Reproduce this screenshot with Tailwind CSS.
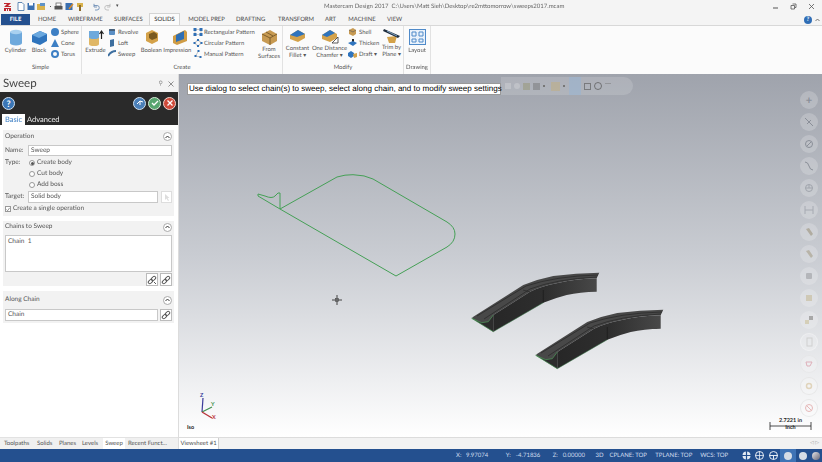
<!DOCTYPE html>
<html lang="en">
<head>
<meta charset="UTF-8">
<title>Mastercam Design 2017</title>
<script src="https://cdn.jsdelivr.net/npm/@tailwindcss/browser@4"></script>
</head>
<body class="m-0 overflow-hidden bg-white">
<div class="w-[822px] h-[462px] flex flex-col overflow-hidden font-['Lato',sans-serif] [text-rendering:geometricPrecision] text-[#4a4a4a] blur-[0.4px]">

  <!-- title bar -->
  <div class="h-[13px] flex items-center bg-[#f4f4f4] relative">
    <div class="flex items-center gap-[2px] pl-[3px]">
      <svg width="9" height="10" viewBox="0 0 9 10"><path d="M1 1h7L5 4h3v1H1l3-3H1zM1 6h7v3H6V7H5v2H4V7H3v2H1z" fill="#c0272d"/></svg>
      <svg class="ml-[3px]" width="8" height="9" viewBox="0 0 8 9"><path d="M1 .5h4l2 2v6H1z" fill="#fff" stroke="#3d6ea5" stroke-width=".8"/></svg>
      <svg width="8" height="9" viewBox="0 0 8 9"><rect x=".5" y="1" width="7" height="7" fill="#3a6fb0"/><rect x="2" y="1" width="4" height="2.5" fill="#fff"/></svg>
      <svg width="10" height="9" viewBox="0 0 10 9"><path d="M0 2h4l1 1h3v5H0z" fill="#d9b24c"/><path d="M3 1h5v3H3z" fill="#5f93c7"/></svg>
      <span class="w-[1px] h-[1px] mx-[1px] bg-[#555]"></span>
      <svg width="9" height="9" viewBox="0 0 9 9"><rect x="2" y="1" width="5" height="3" fill="#fff" stroke="#555" stroke-width=".7"/><rect x=".5" y="4" width="8" height="3.5" fill="#555"/></svg>
      <svg width="9" height="9" viewBox="0 0 9 9"><rect x=".5" y="1" width="7" height="7" fill="#3a6fb0"/><path d="M4 7l4-5" stroke="#d98a2b" stroke-width="1.4"/></svg>
      <svg width="9" height="10" viewBox="0 0 9 10"><path d="M1 1h6v4H1z" fill="#d9b24c"/><path d="M3 3h2v6H3z" fill="#8a6a2a"/></svg>
      <svg class="ml-[5px]" width="8" height="8" viewBox="0 0 8 8"><path d="M2 2.500h3a2 2 0 0 1 0 4.500H3M2 .8v3.200h3" fill="none" stroke="#6f8fb5" stroke-width=".9"/></svg>
      <svg class="ml-[2px]" width="8" height="8" viewBox="0 0 8 8"><path d="M6 2.500H3a2 2 0 0 0 0 4.500h2M6 .8v3.200H3" fill="none" stroke="#bbb" stroke-width=".9"/></svg>
      <span class="ml-[2px] text-[5px] leading-none">▾</span>
    </div>
    <div class="absolute left-[324px] top-[2px] text-[6px] leading-[9px] whitespace-pre text-[#666]">Mastercam Design 2017  C:\Users\Matt Sieh\Desktop\re2mttomorrow\sweeps2017.mcam</div>
    <div class="ml-auto flex items-center gap-[11px] pr-[7px] text-[#555]">
      <svg width="7" height="7" viewBox="0 0 7 7"><path d="M1 5h5" stroke="#555"/></svg>
      <svg width="7" height="7" viewBox="0 0 7 7"><path d="M2.500 1h3.500v3.500h-1M1 2.500h3.500v3.500H1z" fill="none" stroke="#555" stroke-width=".8"/></svg>
      <svg width="7" height="7" viewBox="0 0 7 7"><path d="M1 1l5 5M6 1L1 6" stroke="#555" stroke-width=".8"/></svg>
    </div>
  </div>

  <!-- ribbon tabs -->
  <div class="h-[12px] flex items-end bg-[#f4f4f4] text-[5.900px] leading-[11px] whitespace-nowrap relative">
    <div class="w-[29px] h-[11px] ml-[1px] bg-[#24508f] text-white text-center font-bold">FILE</div>
    <div class="ml-[8px] w-[18px] text-center">HOME</div>
    <div class="ml-[12px] w-[34px] text-center">WIREFRAME</div>
    <div class="ml-[12px] w-[28px] text-center">SURFACES</div>
    <div class="ml-[7px] w-[31px] h-[12px] bg-[#fbfbfb] border border-b-0 border-[#d4d4d4] text-center text-[#333]">SOLIDS</div>
    <div class="ml-[8px] w-[37px] text-center">MODEL PREP</div>
    <div class="ml-[11px] w-[29px] text-center">DRAFTING</div>
    <div class="ml-[13px] w-[35px] text-center">TRANSFORM</div>
    <div class="ml-[12px] w-[11px] text-center">ART</div>
    <div class="ml-[12px] w-[28px] text-center">MACHINE</div>
    <div class="ml-[11px] w-[15px] text-center">VIEW</div>
    <div class="ml-auto flex items-center gap-[3px] pr-[2px] pb-[1px]">
      <span class="w-[8px] h-[8px] rounded-full bg-[#2f6db5] text-white text-[6px] leading-[8px] text-center font-bold">?</span>
      <svg width="5" height="4" viewBox="0 0 5 4"><path d="M.5 3l2-2 2 2" fill="none" stroke="#555" stroke-width=".8"/></svg>
    </div>
  </div>

  <!-- ribbon -->
  <div class="h-[49px] flex bg-[#fbfbfb] border-t border-[#d8d8d8] text-[5.900px] leading-[7px] text-[#555] shrink-0">

    <!-- Simple -->
    <div class="w-[82px] border-r border-[#e2e2e2] flex flex-col">
      <div class="flex-1 flex">
        <div class="w-[29px] pl-[2px] flex flex-col items-center pt-[3px]">
          <svg width="14" height="17" viewBox="0 0 14 17"><path d="M1 3v11a6 2.500 0 0 0 12 0V3z" fill="#6ea9dc"/><ellipse cx="7" cy="3" rx="6" ry="2.200" fill="#a8d0ef"/></svg>
          <div class="mt-[1px]">Cylinder</div>
        </div>
        <div class="w-[20px] flex flex-col items-center pt-[3px]">
          <svg width="17" height="17" viewBox="0 0 17 17"><path d="M1 6l8-4 7 3v7l-7 4-8-3z" fill="#2f74bd"/><path d="M1 6l8-4 7 3-8 4z" fill="#6aa8df"/></svg>
          <div class="mt-[1px]">Block</div>
        </div>
        <div class="flex flex-col gap-[3px] pt-[2px] pl-[2px]">
          <div class="flex items-center gap-[2px] h-[8px]"><span class="w-[8px] h-[8px] rounded-full bg-[#3d7fc4]"></span>Sphere</div>
          <div class="flex items-center gap-[2px] h-[8px]"><svg width="8" height="8" viewBox="0 0 8 8"><path d="M4 0l4 8H0z" fill="#3d7fc4"/></svg>Cone</div>
          <div class="flex items-center gap-[2px] h-[8px]"><span class="w-[8px] h-[8px] rounded-full border-2 border-[#3d7fc4]"></span>Torus</div>
        </div>
      </div>
      <div class="h-[11px] text-center leading-[9px]">Simple</div>
    </div>

    <!-- Create -->
    <div class="w-[201px] border-r border-[#e2e2e2] flex flex-col">
      <div class="flex-1 flex">
        <div class="w-[24px] pl-[3px] flex flex-col items-center pt-[3px]">
          <svg width="16" height="17" viewBox="0 0 16 17"><path d="M1 8v7a5 2 0 0 0 10 0V8z" fill="#e0b765"/><path d="M1 2v6a5 2 0 0 0 10 0V2z" fill="#6ea9dc"/><path d="M13.500 10V3M11.500 5l2-3 2 3" fill="none" stroke="#222" stroke-width="1.200"/></svg>
          <div class="mt-[1px]">Extrude</div>
        </div>
        <div class="w-[33px] flex flex-col gap-[3px] pt-[2px] pl-[2px]">
          <div class="flex items-center gap-[2px] h-[8px]"><svg width="8" height="8" viewBox="0 0 8 8"><rect x="1" y="1" width="6" height="6" rx="1" fill="#5a8fc5"/><path d="M1 2h6" stroke="#333"/></svg>Revolve</div>
          <div class="flex items-center gap-[2px] h-[8px]"><svg width="8" height="8" viewBox="0 0 8 8"><path d="M2 1l4-1v7l-4 1z" fill="#3e6f9f"/></svg>Loft</div>
          <div class="flex items-center gap-[2px] h-[8px]"><svg width="8" height="8" viewBox="0 0 8 8"><path d="M0 6q3-5 8-5" fill="none" stroke="#3e6f9f" stroke-width="2"/></svg>Sweep</div>
        </div>
        <div class="w-[54px] flex flex-col pt-[3px]">
          <div class="flex justify-center gap-[13px] h-[17px]">
            <svg width="14" height="16" viewBox="0 0 14 16"><path d="M1 4l6-3 6 3v8l-6 3-6-3z" fill="#d4a24a"/><path d="M4 5l5-2 3 2v4l-5 2-3-2z" fill="#7a5a20"/></svg>
            <svg width="16" height="17" viewBox="0 0 16 17"><path d="M1 7l12-6 2 2v9l-10 4-4-2z" fill="#cf9c45"/><path d="M4 6l8-4v8l-8 3z" fill="#2f6fb5"/></svg>
          </div>
          <div class="mt-[1px] text-center whitespace-nowrap">Boolean Impression</div>
        </div>
        <div class="w-[63px] flex flex-col gap-[3px] pt-[2px]">
          <div class="flex items-center gap-[1px] h-[8px] whitespace-nowrap"><svg class="shrink-0" width="10" height="8" viewBox="0 0 9 8"><path d="M1.500 1.500h6v5h-6z" fill="none" stroke="#aaa" stroke-width=".6"/><path d="M0 0h3v3H0zM6 0h3v3H6zM0 5h3v3H0zM6 5h3v3H6z" fill="#2f6fb5"/></svg>Rectangular Pattern</div>
          <div class="flex items-center gap-[1px] h-[8px] whitespace-nowrap"><svg class="shrink-0" width="10" height="8" viewBox="0 0 9 8"><circle cx="4.500" cy="4" r="2.500" fill="none" stroke="#aaa" stroke-width=".8"/><path d="M3.500 0h2v2h-2zM0 3h2v2H0zM7 3h2v2H7zM3.500 6h2v2h-2z" fill="#2f6fb5"/></svg>Circular Pattern</div>
          <div class="flex items-center gap-[1px] h-[8px] whitespace-nowrap"><svg class="shrink-0" width="10" height="8" viewBox="0 0 9 8"><path d="M5 1L2 6l5 1" fill="none" stroke="#aaa" stroke-width=".7"/><path d="M4 0h2v2H4zM1 5h2v2H1zM6 6h2v2H6z" fill="#2f6fb5"/></svg>Manual Pattern</div>
        </div>
        <div class="flex-1 flex flex-col items-center pt-[3px] leading-[6.500px]">
          <svg width="17" height="17" viewBox="0 0 17 17"><path d="M1 5l8-4 7 4v7l-7 4-8-4z" fill="#c79a52"/><path d="M1 5l8 4 7-4M9 9v7M5 3l7 4" fill="none" stroke="#6b4f22" stroke-width=".8"/></svg>
          <div class="mt-[1px]">From</div>
          <div>Surfaces</div>
        </div>
      </div>
      <div class="h-[11px] text-center leading-[9px]">Create</div>
    </div>

    <!-- Modify -->
    <div class="w-[121px] border-r border-[#e2e2e2] flex flex-col">
      <div class="flex-1 flex">
        <div class="w-[29px] flex flex-col items-center pt-[3px] leading-[6.500px]">
          <svg width="17" height="14" class="mb-[3px]" viewBox="0 0 17 14"><path d="M1 6l8-5 7 4v4l-7 4-8-3z" fill="#d4a24a"/><path d="M1 6l8-5 7 4-8 3z" fill="#2f74bd"/></svg>
          <div>Constant</div>
          <div>Fillet ▾</div>
        </div>
        <div class="w-[35px] flex flex-col items-center pt-[3px] leading-[6.500px]">
          <svg width="18" height="15" class="mb-[2px]" viewBox="0 0 18 15"><path d="M1 6l8-5 7 4v4l-7 4-8-3z" fill="#d4a24a"/><path d="M1 6l8-5 5 3-8 4z" fill="#2f74bd"/><path d="M11 14l6-6v6z" fill="#fff" stroke="#333" stroke-width=".8"/></svg>
          <div class="whitespace-nowrap">One Distance</div>
          <div>Chamfer ▾</div>
        </div>
        <div class="w-[33px] flex flex-col gap-[3px] pt-[2px] pl-[1px]">
          <div class="flex items-center gap-[2px] h-[8px]"><svg width="9" height="8" viewBox="0 0 9 8"><path d="M1 2l4-2 3 2v4l-3 2-4-2z" fill="#c79a52"/><path d="M1 2l4 2 3-2" fill="none" stroke="#555" stroke-width=".6"/></svg>Shell</div>
          <div class="flex items-center gap-[2px] h-[8px]"><svg width="9" height="8" viewBox="0 0 9 8"><path d="M4 0h2v3H4z" fill="#222"/><path d="M0 4l5-2 4 2-4 3z" fill="#2f74bd"/></svg>Thicken</div>
          <div class="flex items-center gap-[2px] h-[8px]"><svg width="9" height="8" viewBox="0 0 9 8"><path d="M0 3l3-2 3 2v3l-3 2-3-2z" fill="#2f74bd"/><path d="M5 4l4-1v4l-3 1z" fill="#d4a24a"/></svg>Draft ▾</div>
        </div>
        <div class="flex-1 flex flex-col items-center pt-[2px] leading-[6.500px]">
          <svg width="18" height="16" class="mb-[1px]" viewBox="0 0 18 16"><path d="M4 9l10-1-2 7-6 0z" fill="#d4a24a"/><path d="M1 1l16 7-2 2L0 3z" fill="#1f2d3d"/><path d="M4 3l10 5" stroke="#9cc4e8" stroke-width=".8"/></svg>
          <div>Trim by</div>
          <div>Plane ▾</div>
        </div>
      </div>
      <div class="h-[11px] text-center leading-[9px]">Modify</div>
    </div>

    <!-- Drawing -->
    <div class="w-[27px] border-r border-[#e2e2e2] flex flex-col">
      <div class="flex-1 flex flex-col items-center pt-[3px]">
        <svg width="17" height="16" viewBox="0 0 17 16"><rect x=".5" y=".5" width="16" height="15" fill="#eaf2fb" stroke="#4f8ac9"/><path d="M3 3h4v4H3zM10 3h4v4h-4zM3 10h4v3H3zM10 10h4v3h-4z" fill="none" stroke="#4f8ac9"/></svg>
        <div class="mt-[2px]">Layout</div>
      </div>
      <div class="h-[11px] text-center leading-[9px]">Drawing</div>
    </div>
  </div>

  <!-- main -->
  <div class="flex-1 flex min-h-0">

    <!-- left panel -->
    <div class="w-[178px] shrink-0 flex flex-col bg-white">
      <div class="h-[18px] flex items-center bg-[#f3f3f3] pl-[3px] pr-[4px] pt-[1px] text-[#444]">
        <span class="text-[11.500px] leading-none">Sweep</span>
        <span class="ml-auto text-[6px] text-[#888] mr-[5px]">⚲</span>
        <svg width="6" height="6" viewBox="0 0 6 6"><path d="M.5.5l5 5M5.500.5l-5 5" stroke="#777" stroke-width=".8"/></svg>
      </div>
      <div class="h-[33px] bg-[#2a2a2a] flex flex-col">
        <div class="h-[22px] flex items-center px-[2px]">
          <span class="w-[13px] h-[13px] rounded-full bg-[#3b76b5] border border-[#cfe0f0] text-white text-[9px] leading-[11px] text-center font-bold">?</span>
          <span class="ml-auto w-[13px] h-[13px] rounded-full bg-[#4a7fb8] border border-[#cfe0f0] flex items-center justify-center">
            <svg width="8" height="8" viewBox="0 0 8 8"><path d="M1 5l3-3M4 2l3 1M4 2v4" stroke="#fff" stroke-width="1" fill="none"/></svg>
          </span>
          <span class="ml-[2px] w-[13px] h-[13px] rounded-full bg-[#58a56f] border border-[#d8ecd8] flex items-center justify-center">
            <svg width="8" height="8" viewBox="0 0 8 8"><path d="M1 4l2 2 4-4" stroke="#fff" stroke-width="1.300" fill="none"/></svg>
          </span>
          <span class="ml-[2px] w-[13px] h-[13px] rounded-full bg-[#cf4a3a] border border-[#f2d6d0] flex items-center justify-center">
            <svg width="8" height="8" viewBox="0 0 8 8"><path d="M1.500 1.500l5 5M6.500 1.500l-5 5" stroke="#fff" stroke-width="1.300"/></svg>
          </span>
        </div>
        <div class="h-[11px] flex text-[7.500px] leading-[11px]">
          <span class="ml-[2px] w-[23px] bg-white text-[#3d7fc4] text-center">Basic</span>
          <span class="ml-[2px] text-[#eee]">Advanced</span>
        </div>
      </div>

      <div class="flex-1 flex flex-col pl-[3px] pr-[4px] pt-[5px] gap-[5px] text-[6.500px] leading-[10px] text-[#555] min-h-0">
        <!-- Operation -->
        <section class="h-[86px] bg-[#f2f2f2] px-[2px] pt-[1px] flex flex-col">
          <div class="flex items-center h-[11px]">
            Operation
            <span class="ml-auto w-[9px] h-[9px] rounded-full bg-white border border-[#aaa] flex items-center justify-center"><svg width="5" height="4" viewBox="0 0 5 4"><path d="M.5 3l2-2 2 2" fill="none" stroke="#333"/></svg></span>
          </div>
          <div class="flex items-center mt-[3px] h-[11px]">
            <span class="w-[23px]">Name:</span>
            <div class="flex-1 h-[11px] bg-white border border-[#c8c8c8] pl-[2px] leading-[9px]">Sweep</div>
          </div>
          <div class="flex mt-[2px]">
            <span class="w-[24px]">Type:</span>
            <div class="flex flex-col gap-[1px]">
              <div class="flex items-center gap-[2px]"><span class="w-[6px] h-[6px] rounded-full border border-[#999] bg-white flex items-center justify-center"><span class="w-[3px] h-[3px] rounded-full bg-[#555]"></span></span>Create body</div>
              <div class="flex items-center gap-[2px]"><span class="w-[6px] h-[6px] rounded-full border border-[#999] bg-white"></span>Cut body</div>
              <div class="flex items-center gap-[2px]"><span class="w-[6px] h-[6px] rounded-full border border-[#999] bg-white"></span>Add boss</div>
            </div>
          </div>
          <div class="flex items-center mt-[1px] h-[12px]">
            <span class="w-[23px]">Target:</span>
            <div class="flex-1 h-[12px] bg-white border border-[#c8c8c8] pl-[2px] leading-[10px]">Solid body</div>
            <div class="ml-[3px] w-[11px] h-[12px] bg-white border border-[#ddd] flex items-center justify-center"><svg width="6" height="7" viewBox="0 0 6 7"><path d="M1 0v6l1.500-1.500L4 7l1-.5-1.500-2.500H5.500z" fill="#ddd"/></svg></div>
          </div>
          <div class="flex items-center gap-[2px] mt-[1px]">
            <span class="w-[6px] h-[6px] border border-[#999] bg-white flex items-center justify-center"><svg width="5" height="5" viewBox="0 0 5 5"><path d="M.5 2.500l1.500 1.500 2.500-3.500" fill="none" stroke="#555" stroke-width=".8"/></svg></span>
            Create a single operation
          </div>
        </section>

        <!-- Chains to Sweep -->
        <section class="h-[65px] bg-[#f2f2f2] px-[2px] flex flex-col">
          <div class="flex items-center h-[12px]">
            Chains to Sweep
            <span class="ml-auto w-[9px] h-[9px] rounded-full bg-white border border-[#aaa] flex items-center justify-center"><svg width="5" height="4" viewBox="0 0 5 4"><path d="M.5 3l2-2 2 2" fill="none" stroke="#333"/></svg></span>
          </div>
          <div class="h-[37px] mt-[2px] bg-white border border-[#c8c8c8] pl-[2px] pt-[1px]">Chain&nbsp; 1</div>
          <div class="flex justify-end gap-[2px] mt-[1px]">
            <span class="w-[12px] h-[13px] bg-white border border-[#bbb] flex items-center justify-center"><svg width="10" height="10" viewBox="0 0 10 10"><g fill="none" stroke="#555"><rect x="1" y="5" width="5" height="3" rx="1.500" transform="rotate(-45 3.500 6.500)"/><rect x="4" y="2" width="5" height="3" rx="1.500" transform="rotate(-45 6.500 3.500)"/><path d="M7 7l2 2"/></g></svg></span>
            <span class="w-[12px] h-[13px] bg-white border border-[#bbb] flex items-center justify-center"><svg width="10" height="10" viewBox="0 0 10 10"><g fill="none" stroke="#555"><rect x="1" y="5" width="5" height="3" rx="1.500" transform="rotate(-45 3.500 6.500)"/><rect x="4" y="2" width="5" height="3" rx="1.500" transform="rotate(-45 6.500 3.500)"/></g></svg></span>
          </div>
        </section>

        <!-- Along Chain -->
        <section class="h-[32px] bg-[#f2f2f2] px-[2px] flex flex-col">
          <div class="flex items-center h-[18px]">
            Along Chain
            <span class="ml-auto w-[9px] h-[9px] rounded-full bg-white border border-[#aaa] flex items-center justify-center"><svg width="5" height="4" viewBox="0 0 5 4"><path d="M.5 3l2-2 2 2" fill="none" stroke="#333"/></svg></span>
          </div>
          <div class="flex items-center gap-[2px]">
            <div class="flex-1 h-[12px] bg-white border border-[#c8c8c8] pl-[2px] leading-[10px]">Chain</div>
            <span class="w-[12px] h-[12px] bg-white border border-[#bbb] flex items-center justify-center"><svg width="10" height="10" viewBox="0 0 10 10"><g fill="none" stroke="#555"><rect x="1" y="5" width="5" height="3" rx="1.500" transform="rotate(-45 3.500 6.500)"/><rect x="4" y="2" width="5" height="3" rx="1.500" transform="rotate(-45 6.500 3.500)"/></g></svg></span>
          </div>
        </section>
      </div>

      <!-- panel tabs -->
      <div class="h-[12px] flex bg-[#f0f0f0] text-[6px] leading-[12px] text-[#555] pl-[4px] border-t border-[#e2e2e2]">
        <span class="w-[27px]">Toolpaths</span>
        <span class="ml-[6px] w-[16px]">Solids</span>
        <span class="ml-[6px] w-[18px]">Planes</span>
        <span class="ml-[5px] w-[17px]">Levels</span>
        <span class="ml-[4px] w-[22px] bg-white text-center">Sweep</span>
        <span class="ml-[3px] whitespace-nowrap">Recent Funct...</span>
      </div>
    </div>

    <!-- viewport column -->
    <div class="flex-1 flex flex-col min-w-0 border-l border-[#dcdcdc]">
      <div class="flex-1 relative bg-gradient-to-b from-[#9fa3ac] via-[#c9ccd2] to-[#ffffff] overflow-hidden">

        <!-- model geometry -->
        <svg class="absolute inset-0" width="643" height="363" viewBox="179 74 643 363">
          <defs>
            <linearGradient id="side" x1="0" x2="1" y1="0" y2="0">
              <stop offset="0" stop-color="#272727"/>
              <stop offset="0.500" stop-color="#2e2e2e"/>
              <stop offset="1" stop-color="#484848"/>
            </linearGradient>
            <g id="solid">
              <!-- top band -->
              <path d="M471.700 318.300L473.300 316.700L523.300 285Q538 279 553.300 276Q576 273 599.300 272.700L596.700 278.300Q575 279 556.700 283.300Q542 286 530 291.700L493.300 315V331.700Z" fill="#484848"/>
              <path d="M477 316L526 286Q556 276 598 275M484 319L530 289Q556 279 597 277" fill="none" stroke="#262626" stroke-width=".7"/>
              <path d="M523 290L530 292" stroke="#222" stroke-width=".6"/>
              <!-- side face -->
              <path d="M493.300 315L530 291.700Q542 286 556.700 283.300Q575 279 596.700 278.300V291.700Q580 292 566.700 295Q555 298 543.300 302.700L493.300 331.700Z" fill="url(#side)"/>
              <path d="M543.300 290V302.700" stroke="#151515" stroke-width=".6"/>
              <!-- end face -->
              <path d="M471.700 318.300L481.700 322.700L488.300 321.700L493.300 315V331.700Z" fill="#2c2c2c"/>
              <path d="M471.700 318.300L481.700 322.700L488.300 321.700L493.300 315M471.700 318.300L493.300 331.700" fill="none" stroke="#4f9a5a" stroke-width=".7"/>
              <path d="M493.300 331.700L543.300 302.700" fill="none" stroke="#3c7f4c" stroke-width=".5"/>
            </g>
          </defs>
          <g fill="none" stroke="#45a056" stroke-width="1">
            <path d="M280 209L337 177Q345 174.500 353 174.700Q365 175 373 179L447 222Q455 227 455 234Q455 242 447 247L396 276L280 209"/>
            <path d="M280 209V193L278 193L275 196Q272 199 265 196L258 194V196L280 209"/>
          </g>
          <use href="#solid"/>
          <use href="#solid" x="64" y="37"/>
          <!-- cursor -->
          <path d="M337 295V305M332 300H342" stroke="#444" stroke-width="1"/>
          <rect x="335.500" y="298.500" width="3" height="3" fill="none" stroke="#444" stroke-width=".6"/>
          <!-- gnomon -->
          <path d="M202 412L203 398" stroke="#3a3a9a" stroke-width="1.200"/>
          <path d="M202 412L212 407" stroke="#3f8f4f" stroke-width="1.200"/>
          <path d="M202 412L212 418" stroke="#b8323a" stroke-width="1.400"/>
          <!-- scale bar -->
          <path d="M770 422V430M811 422V430M770 426H811" stroke="#222" stroke-width=".8"/>
        </svg>
        <span class="absolute left-[21px] top-[320px] text-[5.500px] font-bold text-[#3a3a9a] leading-none">Z</span>
        <span class="absolute left-[32px] top-[329px] text-[5.500px] font-bold text-[#3f8f4f] leading-none">Y</span>
        <span class="absolute left-[33px] top-[342px] text-[5.500px] font-bold text-[#b8323a] leading-none">X</span>
        <span class="absolute left-[8px] top-[352px] text-[5.500px] font-bold text-[#222] leading-none">Iso</span>
        <div class="absolute left-[591px] top-[344px] w-[41px] text-center text-[5.500px] leading-[7px] font-bold text-[#222]">2.7221 in<br>Inch</div>

        <!-- prompt and toolbar -->
        <div class="absolute left-[8px] top-[9px] h-[12px] w-[314px] bg-white border border-[#999] text-black text-[8.050px] leading-[10px] pl-[1px] whitespace-nowrap font-['Liberation_Sans',sans-serif]">Use dialog to select chain(s) to sweep, select along chain, and to modify sweep settings</div>
        <div class="absolute left-[322px] top-[3px] h-[18px] w-[132px] rounded-r-full bg-white/15 flex items-center pl-[4px] gap-[3px]">
          <span class="w-[6px] h-[6px] bg-white/20"></span>
          <span class="w-[6px] h-[6px] rounded-full bg-white/20"></span>
          <span class="w-[7px] h-[7px] bg-[#9a9a7f]/60"></span>
          <span class="w-[7px] h-[7px] bg-[#666]/40"></span>
          <span class="w-[2px] h-[2px] bg-[#777]"></span>
          <span class="ml-[3px] w-[9px] h-[9px] bg-[#c2ad7e]/50"></span>
          <span class="w-[2px] h-[2px] bg-[#777]"></span>
          <span class="ml-[1px] w-[12px] h-[18px] bg-[#8fb3dc]/40"></span>
          <span class="w-[7px] h-[7px] border border-[#555]/60"></span>
          <span class="w-[8px] h-[8px] rounded-full border border-[#555]/70"></span>
          <span class="w-[6px] h-[6px] border-t border-[#777]/50"></span>
        </div>

        <!-- right side round buttons -->
        <div class="absolute right-[4px] top-[17px] flex flex-col gap-[4px]">
          <span class="w-[18px] h-[18px] rounded-full bg-white/20 flex items-center justify-center text-[11px] leading-none font-bold text-[#8a8f98]">+</span>
          <span class="w-[18px] h-[18px] rounded-full bg-white/20 flex items-center justify-center"><svg width="10" height="10" viewBox="0 0 10 10"><path d="M1 1l8 8M3 7l4-4" stroke="#8a8f98"/></svg></span>
          <span class="w-[18px] h-[18px] rounded-full bg-white/20 flex items-center justify-center"><svg width="10" height="10" viewBox="0 0 10 10"><circle cx="5" cy="5" r="3.500" fill="none" stroke="#8a8f98"/><path d="M3 7l4-4" stroke="#8a8f98"/></svg></span>
          <span class="w-[18px] h-[18px] rounded-full bg-white/20 flex items-center justify-center"><svg width="10" height="10" viewBox="0 0 10 10"><path d="M1 1q3 0 4 4t4 4" fill="none" stroke="#8a8f98"/></svg></span>
          <span class="w-[18px] h-[18px] rounded-full bg-white/20 flex items-center justify-center"><svg width="10" height="10" viewBox="0 0 10 10"><circle cx="5" cy="5" r="3.500" fill="none" stroke="#a0a4ac"/><path d="M2 5h6M5 2v3" stroke="#a0a4ac"/></svg></span>
          <span class="w-[18px] h-[18px] rounded-full bg-white/20 flex items-center justify-center"><svg width="10" height="10" viewBox="0 0 10 10"><path d="M1 1v8M9 1v8M1 5h8" stroke="#a6aab2"/></svg></span>
          <span class="w-[18px] h-[18px] rounded-full bg-white/20 flex items-center justify-center"><svg width="10" height="10" viewBox="0 0 10 10"><path d="M2 2l3-1 4 6-2 2z" fill="#b0aca0"/></svg></span>
          <span class="w-[18px] h-[18px] rounded-full bg-white/20 flex items-center justify-center"><svg width="10" height="10" viewBox="0 0 10 10"><path d="M2 2l3-1 4 6-2 2z" fill="#b8b4a8"/></svg></span>
          <span class="w-[18px] h-[18px] rounded-full bg-white/20 flex items-center justify-center"><svg width="10" height="10" viewBox="0 0 10 10"><rect x="2" y="2" width="6" height="6" rx="1" fill="#b4b6ba"/></svg></span>
          <span class="w-[18px] h-[18px] rounded-full bg-white/20 flex items-center justify-center"><svg width="10" height="10" viewBox="0 0 10 10"><rect x="2" y="2" width="6" height="6" fill="#cfc9b6"/></svg></span>
          <span class="w-[18px] h-[18px] rounded-full bg-white/20 flex items-center justify-center"><svg width="10" height="10" viewBox="0 0 10 10"><rect x="5" y="1" width="4" height="4" fill="#a8a8a8"/><rect x="1" y="5" width="4" height="4" fill="#d5cfb8"/></svg></span>
          <span class="w-[18px] h-[18px] rounded-full bg-white/20 border border-white/30 flex items-center justify-center"><svg width="10" height="10" viewBox="0 0 10 10"><rect x="3" y="1" width="5" height="8" fill="none" stroke="#d0d0d0"/></svg></span>
          <span class="w-[18px] h-[18px] rounded-full bg-white/20 border border-[#ddd]/40 flex items-center justify-center"><svg width="10" height="10" viewBox="0 0 10 10"><path d="M2 3h6l-2 4H3z" fill="none" stroke="#dfb0ba"/></svg></span>
          <span class="w-[18px] h-[18px] rounded-full bg-white/20 border border-[#ddd]/60 flex items-center justify-center"><svg width="10" height="10" viewBox="0 0 10 10"><circle cx="5" cy="5" r="2.500" fill="none" stroke="#e0d4bc" stroke-width="1.500"/></svg></span>
          <span class="w-[18px] h-[18px] rounded-full bg-white/20 border border-[#ddd]/60 flex items-center justify-center"><svg width="10" height="10" viewBox="0 0 10 10"><circle cx="5" cy="5" r="3.500" fill="none" stroke="#e6b8b8"/><path d="M2.500 2.500l5 5" stroke="#e6b8b8"/></svg></span>
        </div>
      </div>

      <!-- viewsheet tabs -->
      <div class="h-[12px] flex items-stretch bg-[#f2f2f2] border-t border-[#dcdcdc] text-[6px] leading-[11px] text-[#555] whitespace-nowrap">
        <span class="w-[40px] bg-white text-center border-r border-[#cfcfcf]">Viewsheet #1</span>
        <span class="ml-auto pr-[3px] text-[5px] text-[#999] leading-[11px]">◁ ▷</span>
      </div>
    </div>
  </div>

  <!-- status bar -->
  <div class="h-[13px] shrink-0 bg-[#24508f] text-[#cfdcee] text-[6px] leading-[13px] whitespace-nowrap flex items-center relative">
    <span class="ml-[456px] w-[10px]">X:</span>
    <span class="w-[40px]">9.97074</span>
    <span class="w-[10px]">Y:</span>
    <span class="w-[37px]">-4.71836</span>
    <span class="w-[10px]">Z:</span>
    <span class="w-[33px]">0.00000</span>
    <span class="w-[14px]">3D</span>
    <span class="w-[46px]">CPLANE: TOP</span>
    <span class="w-[45px]">TPLANE: TOP</span>
    <span class="w-[38px]">WCS: TOP</span>
    <span class="ml-[1px] flex items-center">
      <span class="w-[14px] flex justify-center"><svg width="9" height="9" viewBox="0 0 9 9"><circle cx="4.500" cy="4.500" r="4" fill="#e4ebf4"/><path d="M4.500 0v9M0 4.500h9" stroke="#24508f" stroke-width="1.200"/></svg></span>
      <span class="w-[13px] flex justify-center"><svg width="9" height="9" viewBox="0 0 9 9"><circle cx="4.500" cy="4.500" r="4" fill="none" stroke="#e4ebf4"/><path d="M4.500 0v9M0 4.500h9" stroke="#e4ebf4" stroke-width=".8"/></svg></span>
      <span class="w-[14px] flex justify-center"><svg width="9" height="9" viewBox="0 0 9 9"><circle cx="4.500" cy="4.500" r="4" fill="#24508f" stroke="#e4ebf4"/><path d="M0 4.500h9M4.500 4.500v4" stroke="#e4ebf4"/></svg></span>
      <span class="w-[16px] h-[13px] bg-[#3f73b5] flex items-center justify-center"><span class="w-[8px] h-[8px] rounded-full bg-[#d6dde6]"></span></span>
      <span class="w-[13px] flex justify-center"><span class="w-[8px] h-[8px] rounded-full bg-[#d6dde6]"></span></span>
      <span class="w-[13px] flex justify-center"><span class="w-[8px] h-[8px] rounded-full bg-gradient-to-br from-[#e8e8e8] to-[#667]"></span></span>
    </span>
  </div>
</div>
</body>
</html>
